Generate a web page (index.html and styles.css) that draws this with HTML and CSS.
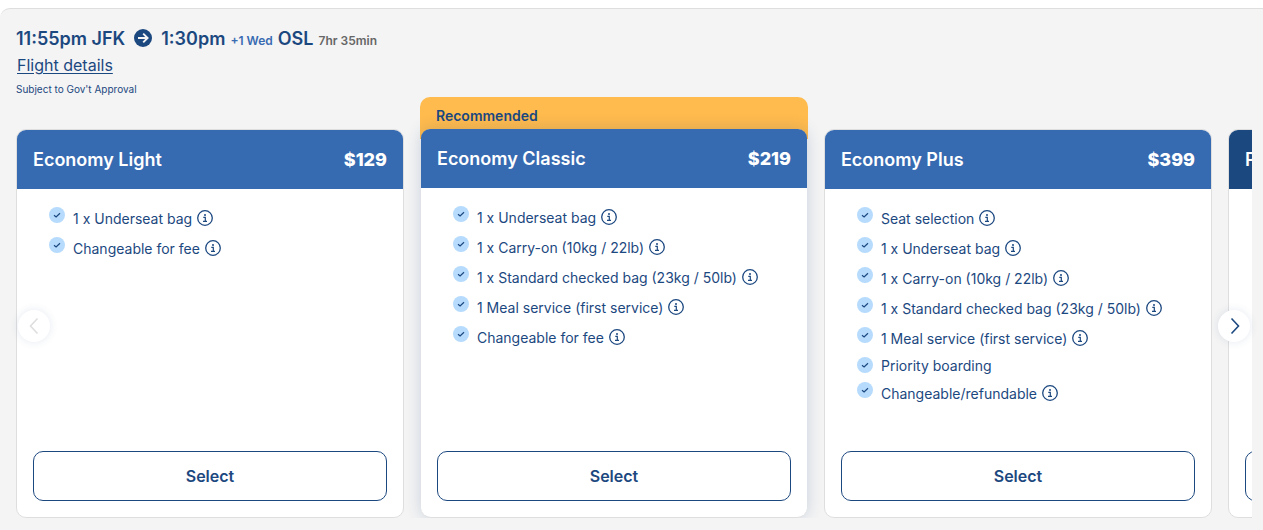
FILE: index.html
```html
<!DOCTYPE html>
<html lang="en">
<head>
<meta charset="utf-8">
<title>Select your fare</title>
<link rel="stylesheet" href="styles.css">
</head>
<body>
<svg class="sprite" aria-hidden="true">
  <symbol id="check" viewBox="0 0 16 16">
    <circle cx="8" cy="8" r="8" fill="#b6dbfd"/>
    <path d="M5 8.2 7.1 10 11 6.2" fill="none" stroke="#1c4880" stroke-width="1.2"/>
  </symbol>
  <symbol id="info" viewBox="0 0 16 16">
    <circle cx="8" cy="8" r="7.3" fill="none" stroke="currentColor" stroke-width="1.3"/>
    <circle cx="8" cy="4.9" r="1" fill="currentColor"/>
    <path d="M6.3 7.4H8.3V11.2M6 11.3H10" fill="none" stroke="currentColor" stroke-width="1.2"/>
  </symbol>
</svg>
<main class="flight">
  <header class="summary">
    <h1 class="route">
      <span>11:55pm JFK</span>
      <svg class="route-arrow" viewBox="0 0 18 18" aria-hidden="true"><circle cx="9" cy="9" r="9" fill="currentColor"/><path d="M4 9H13.3M9.2 4.6 13.6 9 9.2 13.4" fill="none" stroke="#f4f4f4" stroke-width="1.9"/></svg>
      <span>1:30pm</span>
      <small class="day">+1 Wed</small>
      <span>OSL</span>
      <small class="duration">7hr 35min</small>
    </h1>
    <a class="details" href="#">Flight details</a>
    <p class="approval">Subject to Gov't Approval</p>
  </header>
  <section class="carousel" aria-label="Fares">
    <div class="track">
      <article class="fare">
        <div class="card">
          <div class="card-head"><h2>Economy Light</h2><span class="price">$129</span></div>
          <ul class="perks">
            <li><svg class="tick"><use href="#check"/></svg><span>1 x Underseat bag</span><button class="info" aria-label="About underseat bag"><svg><use href="#info"/></svg></button></li>
            <li><svg class="tick"><use href="#check"/></svg><span>Changeable for fee</span><button class="info" aria-label="About changes"><svg><use href="#info"/></svg></button></li>
          </ul>
          <button class="select">Select</button>
        </div>
      </article>
      <article class="fare recommended">
        <p class="ribbon">Recommended</p>
        <div class="card">
          <div class="card-head"><h2>Economy Classic</h2><span class="price">$219</span></div>
          <ul class="perks">
            <li><svg class="tick"><use href="#check"/></svg><span>1 x Underseat bag</span><button class="info" aria-label="About underseat bag"><svg><use href="#info"/></svg></button></li>
            <li><svg class="tick"><use href="#check"/></svg><span>1 x Carry-on (10kg / 22lb)</span><button class="info" aria-label="About carry-on"><svg><use href="#info"/></svg></button></li>
            <li><svg class="tick"><use href="#check"/></svg><span>1 x Standard checked bag (23kg / 50lb)</span><button class="info" aria-label="About checked bag"><svg><use href="#info"/></svg></button></li>
            <li><svg class="tick"><use href="#check"/></svg><span>1 Meal service (first service)</span><button class="info" aria-label="About meal service"><svg><use href="#info"/></svg></button></li>
            <li><svg class="tick"><use href="#check"/></svg><span>Changeable for fee</span><button class="info" aria-label="About changes"><svg><use href="#info"/></svg></button></li>
          </ul>
          <button class="select">Select</button>
        </div>
      </article>
      <article class="fare">
        <div class="card">
          <div class="card-head"><h2>Economy Plus</h2><span class="price">$399</span></div>
          <ul class="perks">
            <li><svg class="tick"><use href="#check"/></svg><span>Seat selection</span><button class="info" aria-label="About seat selection"><svg><use href="#info"/></svg></button></li>
            <li><svg class="tick"><use href="#check"/></svg><span>1 x Underseat bag</span><button class="info" aria-label="About underseat bag"><svg><use href="#info"/></svg></button></li>
            <li><svg class="tick"><use href="#check"/></svg><span>1 x Carry-on (10kg / 22lb)</span><button class="info" aria-label="About carry-on"><svg><use href="#info"/></svg></button></li>
            <li><svg class="tick"><use href="#check"/></svg><span>1 x Standard checked bag (23kg / 50lb)</span><button class="info" aria-label="About checked bag"><svg><use href="#info"/></svg></button></li>
            <li><svg class="tick"><use href="#check"/></svg><span>1 Meal service (first service)</span><button class="info" aria-label="About meal service"><svg><use href="#info"/></svg></button></li>
            <li><svg class="tick"><use href="#check"/></svg><span>Priority boarding</span></li>
            <li><svg class="tick"><use href="#check"/></svg><span>Changeable/refundable</span><button class="info" aria-label="About changes and refunds"><svg><use href="#info"/></svg></button></li>
          </ul>
          <button class="select">Select</button>
        </div>
      </article>
      <article class="fare premium">
        <div class="card">
          <div class="card-head"><h2>P</h2></div>
          <ul class="perks"></ul>
          <button class="select" aria-label="Select"></button>
        </div>
      </article>
    </div>
    <button class="nav prev" aria-label="Previous fares" disabled><svg viewBox="0 0 32 32"><path d="M19.5 8.5 12.5 16 19.5 23.5" fill="none" stroke="currentColor" stroke-width="1.6"/></svg></button>
    <button class="nav next" aria-label="Next fares"><svg viewBox="0 0 32 32"><path d="M13.5 8.5 20.5 16 13.5 23.5" fill="none" stroke="currentColor" stroke-width="1.6"/></svg></button>
  </section>
</main>
</body>
</html>
```
FILE: styles.css
```css
* { box-sizing: border-box; }

body {
  margin: 8px 0 0;
  background: #fff;
  color: #1c4880;
  font-family: Inter, "Liberation Sans", sans-serif;
  font-size: 14px;
}

h1, h2, p, ul { margin: 0; padding: 0; }
button { font: inherit; color: inherit; cursor: pointer; }
.sprite { position: absolute; width: 0; height: 0; }

.flight {
  padding: 17px 11px 12px 16px;
  background: #f4f4f4;
  border-top: 1px solid #dedede;
  border-radius: 10px 0 0 0;
}

.summary {
  display: flex;
  flex-direction: column;
  align-items: flex-start;
}

.route {
  display: flex;
  align-items: baseline;
  gap: 5px;
  font-size: 18px;
  font-weight: 600;
  line-height: 26px;
}
.route-arrow {
  width: 18px;
  height: 18px;
  align-self: flex-start;
  margin: 3px 4px 0;
}
.route small { font-size: 12px; }
.day { color: #386bb2; }
.duration { color: #666; }

.details {
  margin-left: 1px;
  color: inherit;
  font-size: 16px;
  line-height: 22px;
  text-underline-offset: 2px;
}
.approval {
  margin-top: 5px;
  font-size: 10px;
  line-height: 16px;
}

.carousel { position: relative; }

.track {
  display: flex;
  gap: 16px;
  overflow: hidden;
}

/* Three fares fit, with the edge of the next one showing */
.fare {
  flex: 0 0 calc((100% - 72px) / 3);
  display: flex;
  flex-direction: column;
  padding-top: 32px;
}
.card {
  flex: 1;
  display: flex;
  flex-direction: column;
  background: #fff;
  border: 1px solid #dedede;
  border-radius: 10px;
}
.card-head {
  display: flex;
  align-items: center;
  justify-content: space-between;
  height: 59px;
  padding: 0 16px;
  border-radius: 9px 9px 0 0;
  background: #366ab1;
  color: #fff;
  font-size: 18px;
}
.card-head h2 { font-size: 18px; font-weight: 600; }
.price { font-weight: 800; }
.premium .card-head { background: #1c4880; }

.recommended { padding-top: 0; }
.ribbon {
  height: 42px;
  margin-bottom: -10px;
  padding: 0 16px;
  border-radius: 10px 10px 0 0;
  background: #ffbb4d;
  font-weight: 600;
  line-height: 38px;
}
.recommended .card {
  margin: 0 1px;
  border-width: 0 0 1px;
  box-shadow: 0 0 16px rgba(28, 72, 128, 0.2);
}

.perks {
  flex: 1;
  margin: 18px 16px 39px 32px;
  list-style: none;
}
.perks li {
  display: flex;
  align-items: center;
  margin-bottom: 8px;
  line-height: 16px;
}
.perks span { padding-top: 1px; }
.tick {
  width: 16px;
  height: 16px;
  flex: none;
  align-self: flex-start;
  margin-right: 8px;
}
.info {
  display: flex;
  margin-left: 5px;
  padding: 3px 0;
  border: 0;
  background: none;
}
.info svg { width: 16px; height: 16px; }

.select {
  height: 50px;
  margin: 0 16px 16px;
  border: 1px solid #1c4880;
  border-radius: 10px;
  background: #fff;
  font-size: 16px;
  font-weight: 600;
}

.nav {
  position: absolute;
  top: 213px;
  width: 32px;
  height: 32px;
  padding: 0;
  border: 0;
  border-radius: 50%;
  background: #fff;
  box-shadow: 0 0 8px rgba(28, 72, 128, 0.12);
}
.nav svg { display: block; width: 32px; height: 32px; }
.prev { left: 2px; }
.next { right: 2px; }
.nav:disabled { color: #dedede; cursor: default; }
```
